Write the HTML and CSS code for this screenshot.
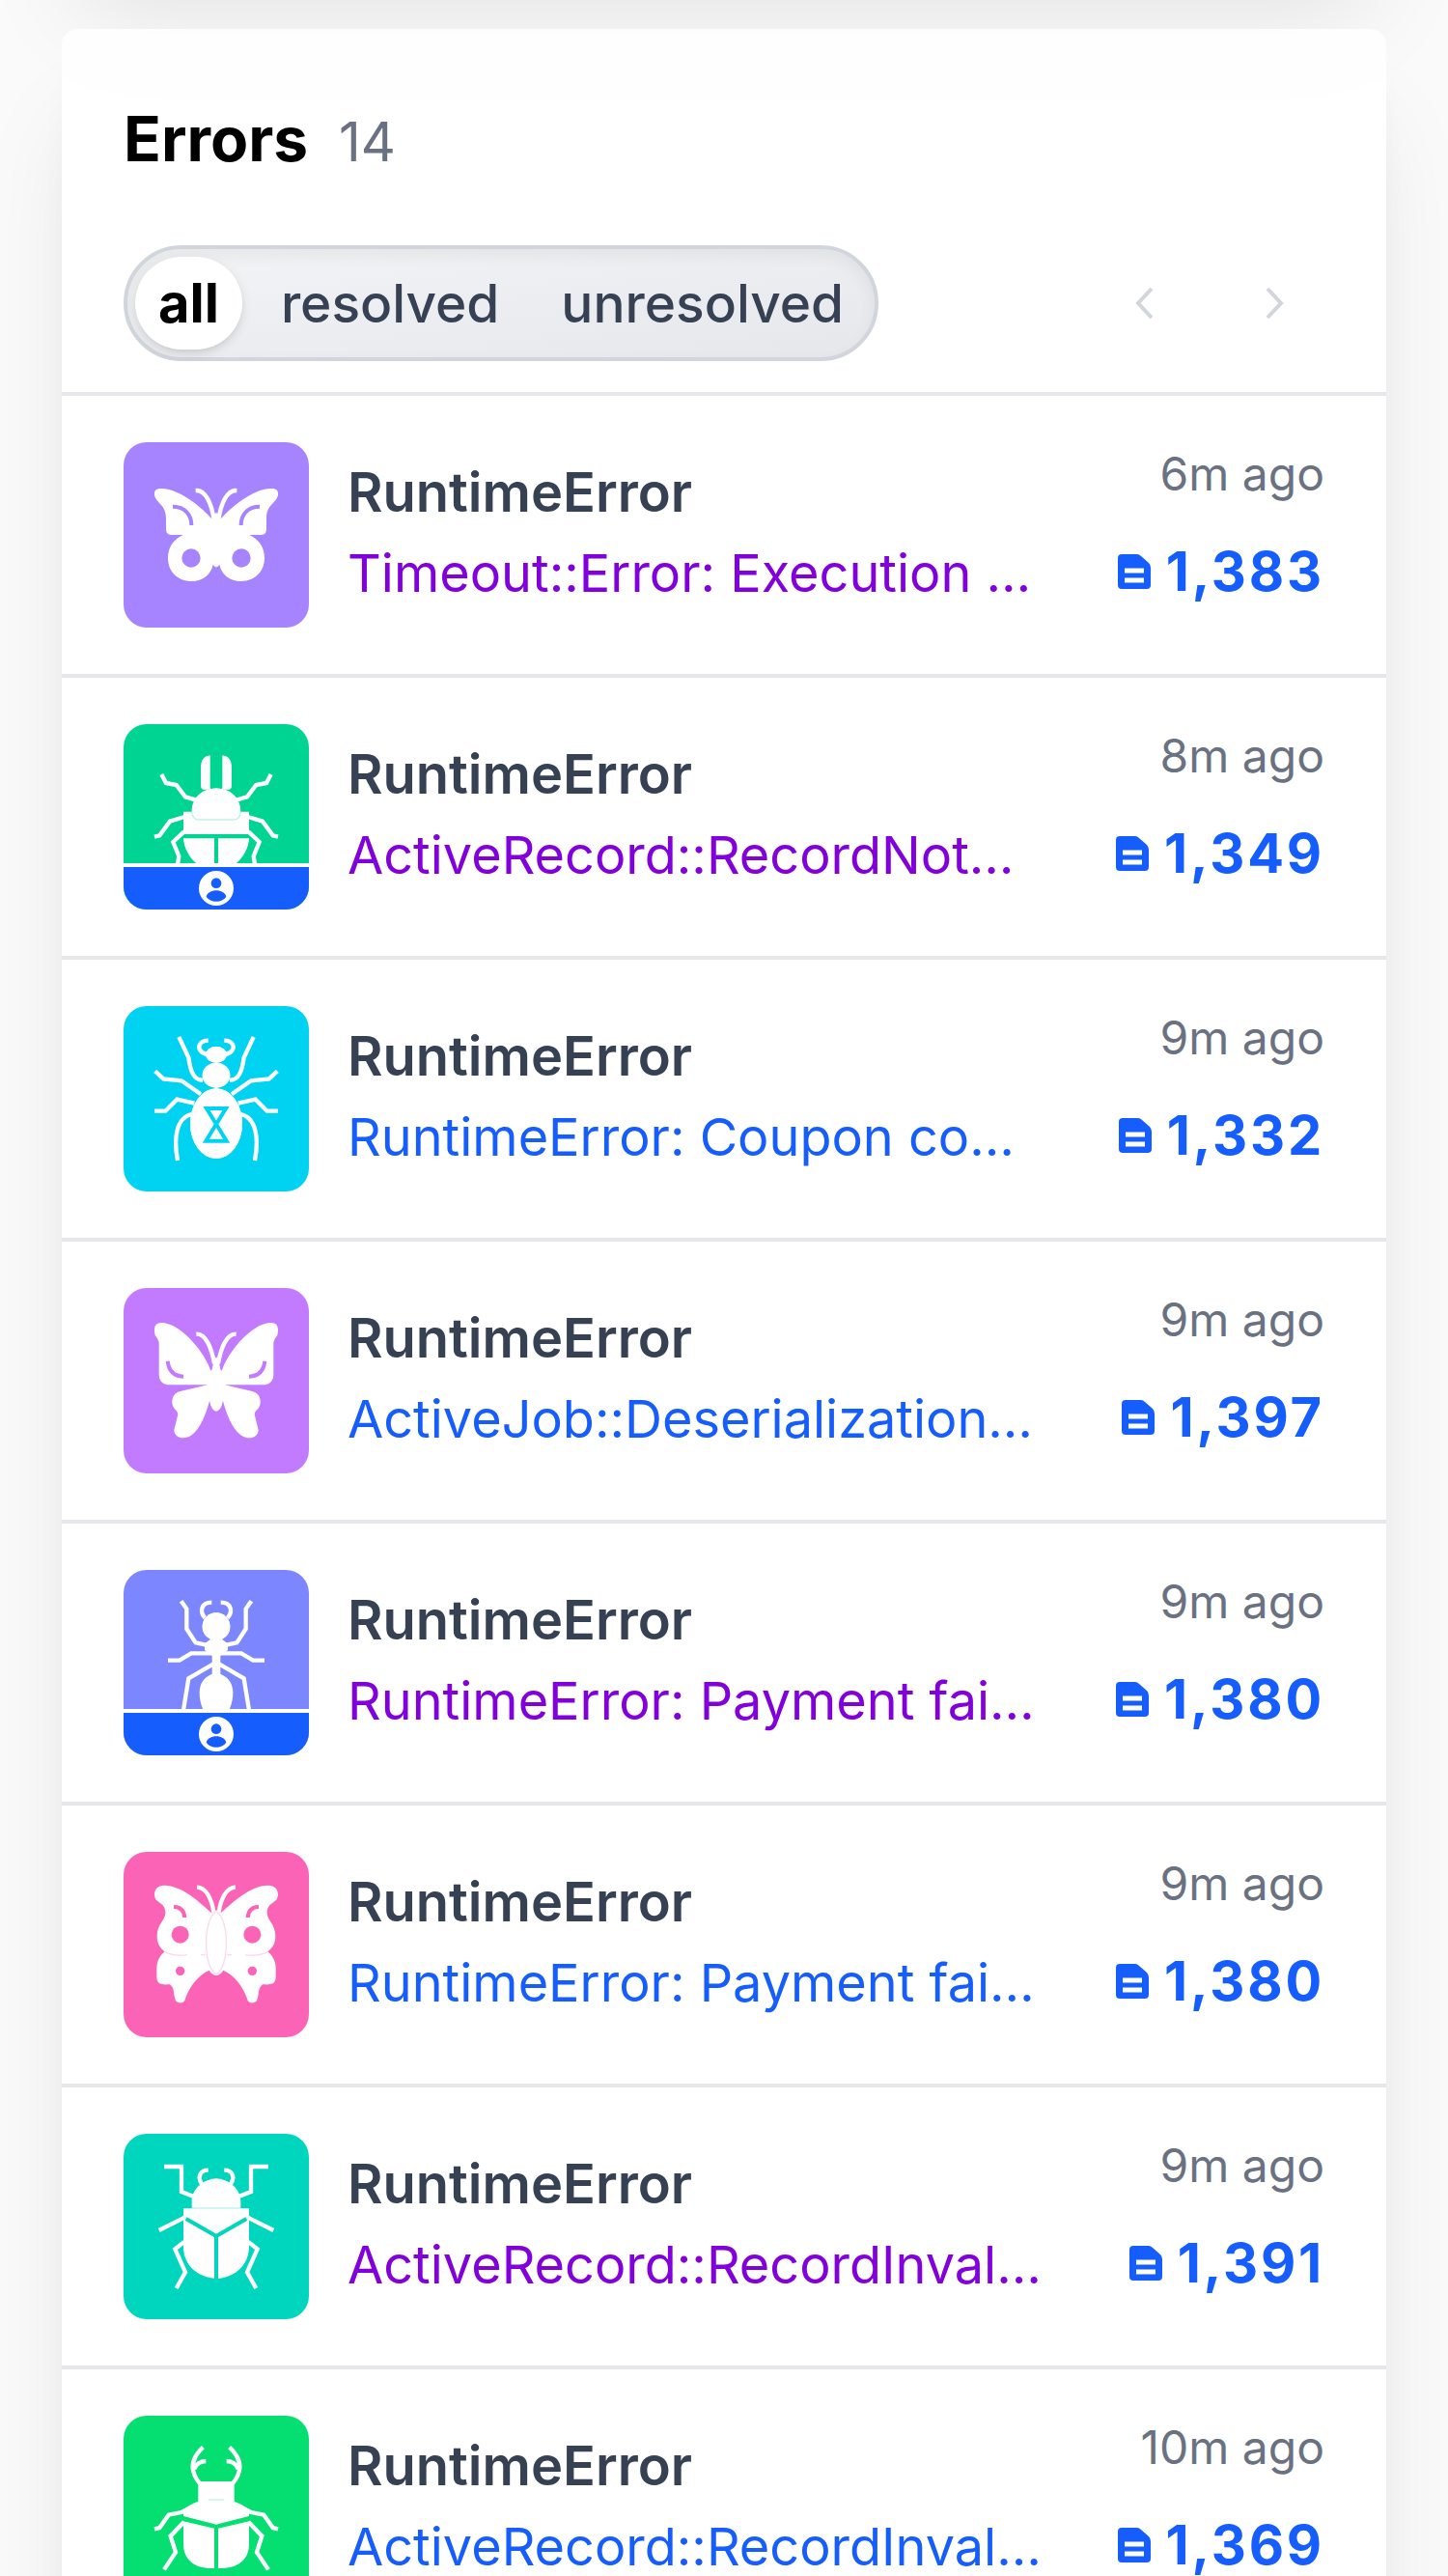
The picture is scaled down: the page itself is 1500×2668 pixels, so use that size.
FILE: index.html
```
<!DOCTYPE html>
<html lang="en">

<head>
    <meta charset="UTF-8">
    <meta name="viewport" content="width=device-width, initial-scale=1.0">
    <title>Errors</title>
    <link rel="stylesheet" href="styles.css">
</head>

<body>
    <!-- shared icons -->
    <svg class="sprite" aria-hidden="true">
        <symbol id="doc" viewBox="0 0 34 36">
            <path fill="currentColor" d="M4 0H20Q22 0 24 2L32 9Q34 11 34 14V32Q34 36 30 36H4Q0 36 0 32V4Q0 0 4 0Z" />
            <path stroke="#fff" stroke-width="5" d="M7 17H27M7 27H27" />
        </symbol>
        <symbol id="user" viewBox="0 0 108 108">
            <circle cx="54" cy="54" r="54" fill="#fff" />
            <circle cx="54" cy="38" r="16" fill="currentColor" />
            <path fill="currentColor" d="M23 80C28 54 80 54 85 80C72 100 36 100 23 80Z" />
        </symbol>
    </svg>

    <main class="page">
        <section class="card summary"></section>

        <section class="card errors">
            <header class="head">
                <h1>Errors</h1>
                <span class="total">14</span>
            </header>

            <div class="toolbar">
                <nav class="filter">
                    <a class="active" href="#all">all</a>
                    <a href="#resolved">resolved</a>
                    <a href="#unresolved">unresolved</a>
                </nav>
                <div class="pager">
                    <button type="button" aria-label="Previous page"><svg viewBox="0 0 24 24"><path d="M15.5 4.5L8.5 12l7 7.5" /></svg></button>
                    <button type="button" aria-label="Next page"><svg viewBox="0 0 24 24"><path d="M8.5 4.5l7 7.5l-7 7.5" /></svg></button>
                </div>
            </div>

            <ul class="list">
                <li class="row">
                    <div class="tile violet">
                        <svg class="bug" viewBox="24 24 576 576">
                            <g id="b1">
                                <path class="f" d="M300 264C270 230 200 168 140 168C122 168 117 178 121 192C128 214 156 220 156 260V294Q156 312 174 312H210C180 325 162 350 162 384C162 426 192 456 236 456C270 456 296 435 302 404Q306 412 313 412V244Q308 242 306 254Z" />
                                <path class="s" d="M248 174C280 172 298 216 305 266" />
                                <circle class="h" cx="234" cy="384" r="29" />
                                <path class="c" d="M177 224C215 224 235 250 235 282" />
                            </g>
                            <use href="#b1" transform="translate(624) scale(-1 1)" />
                        </svg>
                    </div>
                    <div class="info">
                        <h2>RuntimeError</h2>
                        <a class="seen" href="#1">Timeout::Error: Execution …</a>
                    </div>
                    <div class="meta">
                        <time>6m ago</time>
                        <span class="count"><svg><use href="#doc" /></svg>1,383</span>
                    </div>
                </li>
                <li class="row">
                    <div class="tile emerald">
                        <svg class="bug" viewBox="24 30 576 576">
                            <g id="b2">
                                <path class="f" d="M293 127V226Q293 233 302 233H270Q264 230 264 222V158Q266 130 293 127Z" />
                                <path class="f" d="M313 229C265 231 236 260 236 302H210V372H313Z" />
                                <path class="f" d="M210 385H306V490C250 480 212 430 210 385Z" />
                                <path class="s" d="M142 186L156 213L188 219L216 256L250 266M214 318L168 332L136 376L120 380M212 364L178 396L196 440L190 480" />
                                <path class="t" d="M236 302Q238 326 256 327H313" />
                            </g>
                            <use href="#b2" transform="translate(624) scale(-1 1)" />
                        </svg>
                        <span class="owner"><svg><use href="#user" /></svg></span>
                    </div>
                    <div class="info">
                        <h2>RuntimeError</h2>
                        <a class="seen" href="#2">ActiveRecord::RecordNot…</a>
                    </div>
                    <div class="meta">
                        <time>8m ago</time>
                        <span class="count"><svg><use href="#doc" /></svg>1,349</span>
                    </div>
                </li>
                <li class="row">
                    <div class="tile cyan">
                        <svg class="bug" viewBox="24 36 576 576">
                            <g id="b3">
                                <ellipse class="f" cx="312" cy="187" rx="33" ry="25" />
                                <ellipse class="f" cx="312" cy="251" rx="43" ry="39" />
                                <ellipse class="f" cx="312" cy="401" rx="81" ry="109" />
                                <path class="s" d="M287 143C262 143 252 162 264 176Q270 184 286 186M196 132L226 196C232 245 245 266 270 266M122 238L148 262L204 268L264 310M120 362H154L190 326L244 338M192 516C178 440 190 382 236 372" />
                            </g>
                            <use href="#b3" transform="translate(624) scale(-1 1)" />
                            <path class="c" d="M282 354H342L280 455H344Z" />
                        </svg>
                    </div>
                    <div class="info">
                        <h2>RuntimeError</h2>
                        <a href="#3">RuntimeError: Coupon co…</a>
                    </div>
                    <div class="meta">
                        <time>9m ago</time>
                        <span class="count"><svg><use href="#doc" /></svg>1,332</span>
                    </div>
                </li>
                <li class="row">
                    <div class="tile purple">
                        <svg class="bug" viewBox="24 27 576 576">
                            <g id="b4">
                                <path class="f" d="M292 276C268 215 196 135 142 135C120 135 117 152 122 174Q134 188 134 200V296Q135 328 170 328H286L200 348C174 354 168 384 182 402Q195 412 192 424L181 468C182 495 215 500 236 484C262 464 280 420 291 378Q298 410 313 410V242Q308 242 304 256L299 280Q294 288 292 276Z" />
                                <path class="s" d="M250 170C280 168 298 215 306 262" />
                                <path class="c" d="M161 254Q166 300 210 302" />
                            </g>
                            <use href="#b4" transform="translate(624) scale(-1 1)" />
                        </svg>
                    </div>
                    <div class="info">
                        <h2>RuntimeError</h2>
                        <a href="#4">ActiveJob::Deserialization…</a>
                    </div>
                    <div class="meta">
                        <time>9m ago</time>
                        <span class="count"><svg><use href="#doc" /></svg>1,397</span>
                    </div>
                </li>
                <li class="row">
                    <div class="tile indigo">
                        <svg class="bug" viewBox="24 33 576 576">
                            <g id="b5">
                                <circle class="f" cx="312" cy="209" r="43" />
                                <path class="f" d="M313 250H292L276 262V282L299 300V356C270 368 260 390 260 415C260 455 280 500 313 500Z" />
                                <path class="s" d="M298 134C264 134 260 164 277 182M203 130L220 154V216L248 259L280 266M162 314H198L234 292H300M302 326L226 370L209 475" />
                            </g>
                            <use href="#b5" transform="translate(624) scale(-1 1)" />
                        </svg>
                        <span class="owner"><svg><use href="#user" /></svg></span>
                    </div>
                    <div class="info">
                        <h2>RuntimeError</h2>
                        <a class="seen" href="#5">RuntimeError: Payment fai…</a>
                    </div>
                    <div class="meta">
                        <time>9m ago</time>
                        <span class="count"><svg><use href="#doc" /></svg>1,380</span>
                    </div>
                </li>
                <li class="row">
                    <div class="tile pink">
                        <svg class="bug" viewBox="24 24 576 576">
                            <g id="b6">
                                <path class="f" d="M298 214C260 180 205 128 150 128C118 130 116 156 124 172C138 186 154 188 154 214C154 238 128 248 128 285C128 315 142 325 152 334C136 346 127 366 127 385V415C128 440 150 436 168 436C184 448 178 470 186 486C192 496 208 496 214 486C225 450 250 410 290 392Q300 408 313 408V205Z" />
                                <path class="s" d="M252 134C280 134 298 170 304 212" />
                                <circle class="h" cx="200" cy="281" r="27" />
                                <circle class="h" cx="200" cy="394" r="14" />
                                <path class="c" d="M180 194Q212 196 214 228" />
                                <path class="t" d="M313 208C270 230 270 385 313 404M152 334Q180 350 222 344M264 344H278" />
                            </g>
                            <use href="#b6" transform="translate(624) scale(-1 1)" />
                        </svg>
                    </div>
                    <div class="info">
                        <h2>RuntimeError</h2>
                        <a href="#6">RuntimeError: Payment fai…</a>
                    </div>
                    <div class="meta">
                        <time>9m ago</time>
                        <span class="count"><svg><use href="#doc" /></svg>1,380</span>
                    </div>
                </li>
                <li class="row">
                    <div class="tile teal">
                        <svg class="bug" viewBox="24 30 576 576">
                            <g id="b7">
                                <path class="f" d="M313 169C275 170 236 200 236 240V262H210V384C212 436 250 476 313 480Z" />
                                <path class="s" d="M287 143C262 143 252 164 267 186M150 132H204V210L240 224M134 330L214 290M212 366L184 388L216 460L188 510" />
                                <path class="c" d="M218 294L312 348V482" />
                                <path class="t" d="M236 261H313" />
                            </g>
                            <use href="#b7" transform="translate(624) scale(-1 1)" />
                        </svg>
                    </div>
                    <div class="info">
                        <h2>RuntimeError</h2>
                        <a class="seen" href="#7">ActiveRecord::RecordInval…</a>
                    </div>
                    <div class="meta">
                        <time>9m ago</time>
                        <span class="count"><svg><use href="#doc" /></svg>1,391</span>
                    </div>
                </li>
                <li class="row">
                    <div class="tile green">
                        <svg class="bug" viewBox="24 96 576 576">
                            <g id="b8">
                                <path class="f" d="M256 300H313V434L210 408V388Q228 372 256 362Z" />
                                <path class="f" d="M210 424L306 446V570H292C240 568 210 540 210 495Z" />
                                <path class="s" d="M271 194C230 232 230 270 262 308M280 237Q252 238 244 262M228 384L204 396L164 404L136 444L120 448M212 426L170 470L186 520L150 574" />
                                <path class="t" d="M288 357H313" />
                            </g>
                            <use href="#b8" transform="translate(624) scale(-1 1)" />
                        </svg>
                    </div>
                    <div class="info">
                        <h2>RuntimeError</h2>
                        <a href="#8">ActiveRecord::RecordInval…</a>
                    </div>
                    <div class="meta">
                        <time>10m ago</time>
                        <span class="count"><svg><use href="#doc" /></svg>1,369</span>
                    </div>
                </li>
            </ul>
        </section>
    </main>
</body>

</html>
```
FILE: styles.css
```
* {
    box-sizing: border-box;
}

body {
    margin: 0;
    background: #fafafa;
    font-family: Inter, "Liberation Sans", sans-serif;
    font-optical-sizing: none;
    font-size: 56px;
    line-height: 80px;
    color: #364153;
}

h1,
h2,
ul {
    margin: 0;
    padding: 0;
}

a {
    color: #155dfc;
    text-decoration: none;
}

.sprite {
    display: none;
}

.page {
    height: 100vh;
    overflow: hidden;
    padding: 0 64px;
}

.card {
    background: rgba(255, 255, 255, 0.85);
    border-radius: 16px;
    box-shadow: 0 80px 100px -20px rgba(0, 0, 0, 0.1), 0 32px 40px -24px rgba(0, 0, 0, 0.1);
}

/* scrolled out above the list, only its shadow shows */
.summary {
    height: 400px;
    margin-top: -450px;
    margin-bottom: 80px;
}

.head {
    display: flex;
    align-items: baseline;
    gap: 32px;
    padding: 72px 64px 0;
}

.head h1 {
    font-size: 64px;
    line-height: 84px;
    font-weight: 700;
    color: #000;
}

.total {
    color: #6a7282;
}

.toolbar {
    display: flex;
    justify-content: space-between;
    align-items: center;
    padding: 67px 64px 32px;
}

.filter {
    display: flex;
    gap: 16px;
    padding: 8px;
    border: 4px solid #d1d5dc;
    border-radius: 60px;
    background: linear-gradient(to bottom right, #f3f4f6, #e5e7eb);
    box-shadow: inset 0 8px 16px rgba(0, 0, 0, 0.05);
}

.filter a {
    padding: 8px 24px;
    border-radius: 48px;
    font-size: 55px;
    font-weight: 500;
    color: #364153;
}

.filter .active {
    background: #fff;
    color: #000;
    font-size: 56px;
    font-weight: 700;
    box-shadow: 0 4px 12px rgba(0, 0, 0, 0.1), 0 4px 8px -4px rgba(0, 0, 0, 0.1);
}

.pager {
    display: flex;
    gap: 30px;
}

.pager button {
    padding: 24px 28px;
    border: 0;
    background: none;
    color: #d1d5dc;
}

.pager svg {
    display: block;
    width: 48px;
    height: 48px;
    fill: none;
    stroke: currentColor;
    stroke-width: 2;
}

.list {
    list-style: none;
}

.row {
    display: flex;
    gap: 40px;
    padding: 48px 64px;
    border-top: 4px solid #e5e7eb;
}

.tile {
    position: relative;
    flex: none;
    width: 192px;
    height: 192px;
    border-radius: 24px;
    overflow: hidden;
}

.violet { background: #a684ff; color: #a684ff; }
.emerald { background: #00d492; color: #00d492; }
.cyan { background: #00d3f2; color: #00d3f2; }
.purple { background: #c27aff; color: #c27aff; }
.indigo { background: #7c86ff; color: #7c86ff; }
.pink { background: #fb64b6; color: #fb64b6; }
.teal { background: #00d5be; color: #00d5be; }
.green { background: #05df72; color: #05df72; }

.bug {
    display: block;
    width: 192px;
    height: 192px;
}

/* f fill, s stroke, h hole, c cut line, t thin seam */
.f { fill: #fff; }
.s { fill: none; stroke: #fff; stroke-width: 13; }
.h { fill: currentColor; }
.c { fill: none; stroke: currentColor; stroke-width: 12; }
.t { fill: none; stroke: currentColor; stroke-width: 4; opacity: 0.25; }

.owner {
    position: absolute;
    left: 0;
    right: 0;
    bottom: 0;
    display: flex;
    justify-content: center;
    padding: 4px;
    border-top: 4px solid #fff;
    background: #155dfc;
    color: #155dfc;
}

.owner svg {
    width: 36px;
    height: 36px;
}

.info {
    flex: 1;
    min-width: 0;
    padding-top: 12px;
}

.info h2 {
    font-size: 56px;
    line-height: 80px;
    font-weight: 600;
}

.info a {
    display: block;
    margin-top: 4px;
    font-size: 54px;
    white-space: nowrap;
}

.info .seen {
    color: #8200db;
}

.meta {
    flex: none;
    width: 240px;
    display: flex;
    flex-direction: column;
    align-items: flex-end;
}

.meta time {
    font-size: 48px;
    line-height: 66px;
    color: #6a7282;
    white-space: nowrap;
}

.count {
    display: flex;
    align-items: center;
    gap: 16px;
    margin-top: 28px;
    font-weight: 700;
    letter-spacing: 0.05em;
    color: #155dfc;
}

.count svg {
    width: 34px;
    height: 36px;
}
```
